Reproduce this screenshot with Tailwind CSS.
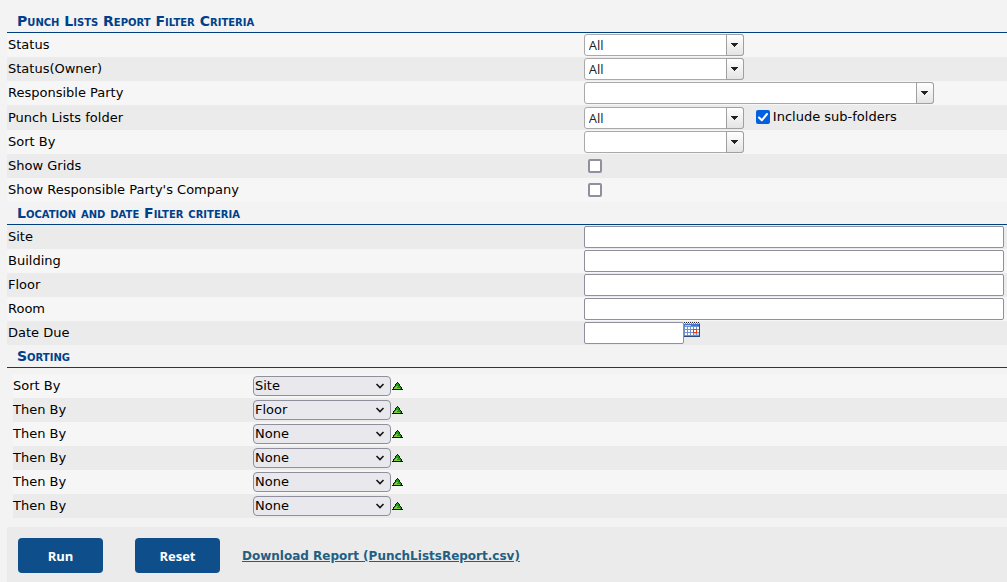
<!DOCTYPE html>
<html lang="en">
<head>
    <meta charset="UTF-8">
    <meta name="viewport" content="width=device-width, initial-scale=1.0">
    <title>Punch Lists Report</title>
    <script src="https://cdn.jsdelivr.net/npm/@tailwindcss/browser@4"></script>
</head>
<body class="bg-[#f3f3f3] min-h-screen flex flex-col font-['Verdana','DejaVu_Sans',sans-serif] text-[13px] leading-4 text-black">
    <!-- Shared icons -->
    <svg class="hidden" aria-hidden="true">
        <symbol id="caret" viewBox="0 0 8 4"><path d="M0 0h7v1H6v1H5v1H4v1H3V3H2V2H1V1H0z" fill="#222"/></symbol>
        <symbol id="chevron" viewBox="0 0 10 6"><path d="M1.500 1L5 4.500 8.500 1" fill="none" stroke="#15141a" stroke-width="1.6"/></symbol>
        <symbol id="sort-up" viewBox="0 0 11 8">
            <path d="M5 0h1v1h1v1h1v2h1v1h1v2h1v1H0V7h1V5h1V4h1V2h1V1h1z" fill="#0b1d08"/>
            <path d="M5 1h1v1h1v2h1v1h1v2H2V5h1V4h1V2h1z" fill="#1e9a1b"/>
            <path d="M5 2v2H4v1H3v1H2v1h6V6H5V5h1V4H5z" fill="#7fcb35"/>
        </symbol>
    </svg>

    <form class="flex flex-col flex-1 ml-[7px]">
        <section>
            <h2 class="h-[33px] pt-[10px] pl-[10px] leading-[22px] border-b border-[#00407f] text-[14px] text-[#00408a] font-bold [font-variant:small-caps]">Punch Lists Report Filter Criteria</h2>
            <div class="grid grid-cols-[57.7%_1fr] items-center h-6 px-px bg-[#f6f6f6]">
                <label for="status">Status</label>
                <div class="relative w-40">
                    <select id="status" class="block appearance-none w-full h-[22px] pl-1 bg-white border border-[#a9a9a9] rounded-[3px] font-['Open_Sans',sans-serif] text-[#222]"><option>All</option></select>
                    <span class="absolute inset-y-0 right-0 w-[18px] flex items-center justify-center border border-[#a0a0a0] rounded-r-[3px] bg-linear-to-b from-white to-[#e4e4e4] pointer-events-none"><svg class="w-2 h-1"><use href="#caret"/></svg></span>
                </div>
            </div>
            <div class="grid grid-cols-[57.7%_1fr] items-center h-6 px-px bg-[#ebebeb]">
                <label for="status-owner">Status(Owner)</label>
                <div class="relative w-40">
                    <select id="status-owner" class="block appearance-none w-full h-[22px] pl-1 bg-white border border-[#a9a9a9] rounded-[3px] font-['Open_Sans',sans-serif] text-[#222]"><option>All</option></select>
                    <span class="absolute inset-y-0 right-0 w-[18px] flex items-center justify-center border border-[#a0a0a0] rounded-r-[3px] bg-linear-to-b from-white to-[#e4e4e4] pointer-events-none"><svg class="w-2 h-1"><use href="#caret"/></svg></span>
                </div>
            </div>
            <div class="grid grid-cols-[57.7%_1fr] items-center h-6 px-px bg-[#f6f6f6]">
                <label for="party">Responsible Party</label>
                <div class="relative w-[350px]">
                    <select id="party" class="block appearance-none w-full h-[22px] pl-1 bg-white border border-[#a9a9a9] rounded-[3px] font-['Open_Sans',sans-serif] text-[#222]"><option></option></select>
                    <span class="absolute inset-y-0 right-0 w-[18px] flex items-center justify-center border border-[#a0a0a0] rounded-r-[3px] bg-linear-to-b from-white to-[#e4e4e4] pointer-events-none"><svg class="w-2 h-1"><use href="#caret"/></svg></span>
                </div>
            </div>
            <div class="grid grid-cols-[57.7%_1fr] items-center h-[25px] px-px bg-[#ebebeb]">
                <label for="folder">Punch Lists folder</label>
                <div class="flex items-start gap-3">
                    <div class="relative w-40">
                        <select id="folder" class="block appearance-none w-full h-[22px] pl-1 bg-white border border-[#a9a9a9] rounded-[3px] font-['Open_Sans',sans-serif] text-[#222]"><option>All</option></select>
                        <span class="absolute inset-y-0 right-0 w-[18px] flex items-center justify-center border border-[#a0a0a0] rounded-r-[3px] bg-linear-to-b from-white to-[#e4e4e4] pointer-events-none"><svg class="w-2 h-1"><use href="#caret"/></svg></span>
                    </div>
                    <label class="flex items-center gap-[3px] leading-[20px]">
                        <span class="relative size-[14px]">
                            <input type="checkbox" checked class="peer block appearance-none size-[14px] rounded-[2px] border-2 border-[#8f8f9d] bg-white checked:border-[#0060df] checked:bg-[#0060df]">
                            <svg viewBox="0 0 14 14" class="absolute inset-0 size-[14px] hidden peer-checked:block pointer-events-none"><path d="M3 7.500L5.800 10.300 11 4" fill="none" stroke="#fff" stroke-width="2" stroke-linecap="round" stroke-linejoin="round"/></svg>
                        </span>
                        Include sub-folders
                    </label>
                </div>
            </div>
            <div class="grid grid-cols-[57.7%_1fr] items-center h-6 px-px bg-[#f6f6f6]">
                <label for="sort">Sort By</label>
                <div class="relative w-40">
                    <select id="sort" class="block appearance-none w-full h-[22px] pl-1 bg-white border border-[#a9a9a9] rounded-[3px] font-['Open_Sans',sans-serif] text-[#222]"><option></option></select>
                    <span class="absolute inset-y-0 right-0 w-[18px] flex items-center justify-center border border-[#a0a0a0] rounded-r-[3px] bg-linear-to-b from-white to-[#e4e4e4] pointer-events-none"><svg class="w-2 h-1"><use href="#caret"/></svg></span>
                </div>
            </div>
            <div class="grid grid-cols-[57.7%_1fr] items-center h-6 px-px bg-[#ebebeb]">
                <label for="grids">Show Grids</label>
                <input id="grids" type="checkbox" class="appearance-none size-[14px] ml-1 rounded-[2px] border-2 border-[#8f8f9d] bg-white checked:border-[#0060df] checked:bg-[#0060df]">
            </div>
            <div class="grid grid-cols-[57.7%_1fr] items-center h-6 px-px bg-[#f6f6f6]">
                <label for="company">Show Responsible Party's Company</label>
                <input id="company" type="checkbox" class="appearance-none size-[14px] ml-1 rounded-[2px] border-2 border-[#8f8f9d] bg-white checked:border-[#0060df] checked:bg-[#0060df]">
            </div>
        </section>

        <section>
            <h2 class="h-[23px] pl-[10px] leading-[22px] border-b border-[#00407f] text-[14px] text-[#00408a] font-bold [font-variant:small-caps]">Location and date Filter criteria</h2>
            <div class="grid grid-cols-[57.8%_1fr] items-center h-6 pl-px pr-[3px] bg-[#ebebeb]">
                <label for="site">Site</label>
                <input id="site" type="text" class="w-full h-[22px] px-1 bg-white border border-[#8f8f9d] rounded-[2px]">
            </div>
            <div class="grid grid-cols-[57.8%_1fr] items-center h-6 pl-px pr-[3px] bg-[#f6f6f6]">
                <label for="building">Building</label>
                <input id="building" type="text" class="w-full h-[22px] px-1 bg-white border border-[#8f8f9d] rounded-[2px]">
            </div>
            <div class="grid grid-cols-[57.8%_1fr] items-center h-6 pl-px pr-[3px] bg-[#ebebeb]">
                <label for="floor">Floor</label>
                <input id="floor" type="text" class="w-full h-[22px] px-1 bg-white border border-[#8f8f9d] rounded-[2px]">
            </div>
            <div class="grid grid-cols-[57.8%_1fr] items-center h-6 pl-px pr-[3px] bg-[#f6f6f6]">
                <label for="room">Room</label>
                <input id="room" type="text" class="w-full h-[22px] px-1 bg-white border border-[#8f8f9d] rounded-[2px]">
            </div>
            <div class="grid grid-cols-[57.8%_1fr] items-center h-6 pl-px pr-[3px] bg-[#ebebeb]">
                <label for="due">Date Due</label>
                <div class="flex items-start">
                    <input id="due" type="text" class="w-[100px] h-[22px] px-1 bg-white border border-[#8f8f9d] rounded-[2px]">
                    <button type="button" aria-label="Pick a date">
                        <svg class="block w-4 h-[15px]" viewBox="0 0 16 15" shape-rendering="crispEdges">
                            <path d="M0 .5h16" stroke="#222" stroke-dasharray="1 1"/>
                            <path d="M1 1.500h15" stroke="#888" stroke-dasharray="1 1"/>
                            <path d="M0 2h16v13H0z" fill="#6f92cc"/>
                            <path d="M0 2h16v2H0z" fill="#3f74d8"/>
                            <path d="M1 3h6v1H1z" fill="#a9c6fb"/>
                            <path d="M1 5h2v2H1zM4 5h2v2H4zM7 5h2v2H7zM10 5h2v2h-2zM13 5h2v2h-2zM1 8h2v2H1zM4 8h2v2H4zM7 8h2v2H7zM13 8h2v2h-2zM1 11h2v2H1zM4 11h2v2H4zM7 11h2v2H7z" fill="#fff"/>
                            <path d="M10 11h2v2h-2zM13 11h2v2h-2z" fill="#c3d5f2"/>
                            <path d="M9.500 7.500h3v3h-3z" fill="#fff" stroke="#e33b0c"/>
                            <path d="M15 2h1v13h-1zM0 14h16v1H0z" fill="#2b4a80"/>
                        </svg>
                    </button>
                </div>
            </div>
        </section>

        <section>
            <h2 class="h-[23px] pl-[10px] leading-[22px] border-b border-[#00407f] text-[14px] text-[#00408a] font-bold [font-variant:small-caps]">Sorting</h2>
            <div class="mt-[6px] ml-[6px]">
                <div class="flex items-center h-6 bg-[#f6f6f6]">
                    <label for="sort-1" class="w-60">Sort By</label>
                    <div class="relative w-[138px]">
                        <select id="sort-1" class="block appearance-none w-full h-5 pl-px bg-[#e9e9ed] border border-[#8f8f9d] rounded-[4px]"><option>Site</option><option>Floor</option><option>None</option></select>
                        <svg class="absolute right-[6px] top-[7px] w-[10px] h-[6px] pointer-events-none"><use href="#chevron"/></svg>
                    </div>
                    <button type="button" aria-label="Ascending" class="ml-px"><svg class="block w-[11px] h-2"><use href="#sort-up"/></svg></button>
                </div>
                <div class="flex items-center h-6 bg-[#ebebeb]">
                    <label for="sort-2" class="w-60">Then By</label>
                    <div class="relative w-[138px]">
                        <select id="sort-2" class="block appearance-none w-full h-5 pl-px bg-[#e9e9ed] border border-[#8f8f9d] rounded-[4px]"><option>Floor</option><option>Site</option><option>None</option></select>
                        <svg class="absolute right-[6px] top-[7px] w-[10px] h-[6px] pointer-events-none"><use href="#chevron"/></svg>
                    </div>
                    <button type="button" aria-label="Ascending" class="ml-px"><svg class="block w-[11px] h-2"><use href="#sort-up"/></svg></button>
                </div>
                <div class="flex items-center h-6 bg-[#f6f6f6]">
                    <label for="sort-3" class="w-60">Then By</label>
                    <div class="relative w-[138px]">
                        <select id="sort-3" class="block appearance-none w-full h-5 pl-px bg-[#e9e9ed] border border-[#8f8f9d] rounded-[4px]"><option>None</option><option>Site</option><option>Floor</option></select>
                        <svg class="absolute right-[6px] top-[7px] w-[10px] h-[6px] pointer-events-none"><use href="#chevron"/></svg>
                    </div>
                    <button type="button" aria-label="Ascending" class="ml-px"><svg class="block w-[11px] h-2"><use href="#sort-up"/></svg></button>
                </div>
                <div class="flex items-center h-6 bg-[#ebebeb]">
                    <label for="sort-4" class="w-60">Then By</label>
                    <div class="relative w-[138px]">
                        <select id="sort-4" class="block appearance-none w-full h-5 pl-px bg-[#e9e9ed] border border-[#8f8f9d] rounded-[4px]"><option>None</option><option>Site</option><option>Floor</option></select>
                        <svg class="absolute right-[6px] top-[7px] w-[10px] h-[6px] pointer-events-none"><use href="#chevron"/></svg>
                    </div>
                    <button type="button" aria-label="Ascending" class="ml-px"><svg class="block w-[11px] h-2"><use href="#sort-up"/></svg></button>
                </div>
                <div class="flex items-center h-6 bg-[#f6f6f6]">
                    <label for="sort-5" class="w-60">Then By</label>
                    <div class="relative w-[138px]">
                        <select id="sort-5" class="block appearance-none w-full h-5 pl-px bg-[#e9e9ed] border border-[#8f8f9d] rounded-[4px]"><option>None</option><option>Site</option><option>Floor</option></select>
                        <svg class="absolute right-[6px] top-[7px] w-[10px] h-[6px] pointer-events-none"><use href="#chevron"/></svg>
                    </div>
                    <button type="button" aria-label="Ascending" class="ml-px"><svg class="block w-[11px] h-2"><use href="#sort-up"/></svg></button>
                </div>
                <div class="flex items-center h-6 bg-[#ebebeb]">
                    <label for="sort-6" class="w-60">Then By</label>
                    <div class="relative w-[138px]">
                        <select id="sort-6" class="block appearance-none w-full h-5 pl-px bg-[#e9e9ed] border border-[#8f8f9d] rounded-[4px]"><option>None</option><option>Site</option><option>Floor</option></select>
                        <svg class="absolute right-[6px] top-[7px] w-[10px] h-[6px] pointer-events-none"><use href="#chevron"/></svg>
                    </div>
                    <button type="button" aria-label="Ascending" class="ml-px"><svg class="block w-[11px] h-2"><use href="#sort-up"/></svg></button>
                </div>
            </div>
        </section>

        <div class="flex-1 flex items-start mt-[9px] pt-[11px] pl-[11px] bg-[#ebebeb] font-bold">
            <button type="submit" class="w-[85px] h-[35px] mr-8 rounded-[4px] bg-[#0e4f8b] text-white font-['Open_Sans',sans-serif]">Run</button>
            <button type="reset" class="w-[85px] h-[35px] mr-[22px] rounded-[4px] bg-[#0e4f8b] text-white font-['Open_Sans',sans-serif]">Reset</button>
            <a href="#" class="leading-[36px] text-[12px] text-[#235f82] underline">Download Report (PunchListsReport.csv)</a>
        </div>
    </form>
</body>
</html>
